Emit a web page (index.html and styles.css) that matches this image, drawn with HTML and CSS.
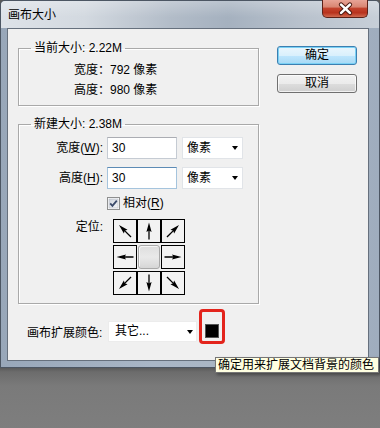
FILE: index.html
```html
<!DOCTYPE html>
<html lang="zh-CN">
<head>
<meta charset="utf-8">
<title>画布大小</title>
<link rel="stylesheet" href="styles.css">
</head>
<body>
<svg class="defs" width="0" height="0" aria-hidden="true">
  <defs>
    <symbol id="arr" viewBox="0 0 22 22">
      <path d="M11 19.5V9" stroke="#000" stroke-width="1.3" fill="none"/>
      <path d="M11 2.5L8.4 12L11 10.6L13.6 12Z" fill="#000"/>
    </symbol>
  </defs>
</svg>
<div class="screen">
  <div class="window">
    <div class="titlebar">
      <span class="title">画布大小</span>
      <div class="close">
        <svg width="46" height="18" viewBox="0 0 46 18">
          <path d="M19.5 4.5L28.5 13M28.5 4.5L19.5 13" stroke="#4a1a12" stroke-width="4.6" stroke-linecap="round"/>
          <path d="M19.5 4.5L28.5 13M28.5 4.5L19.5 13" stroke="#fff" stroke-width="2.6" stroke-linecap="round"/>
        </svg>
      </div>
    </div>
    <div class="client">
      <div class="left">
        <fieldset class="group g1">
          <legend>当前大小: 2.22M</legend>
          <div class="info info-first">宽度：792 像素</div>
          <div class="info">高度：980 像素</div>
        </fieldset>
        <fieldset class="group g2">
          <legend>新建大小: 2.38M</legend>
          <div class="row row-w">
            <span class="lbl">宽度(<u>W</u>):</span>
            <div class="input">30</div>
            <div class="select unit">像素<i class="caret"></i></div>
          </div>
          <div class="row row-h">
            <span class="lbl">高度(<u>H</u>):</span>
            <div class="input focus">30</div>
            <div class="select unit">像素<i class="caret"></i></div>
          </div>
          <div class="row row-check">
            <svg class="checkbox" width="13" height="13" viewBox="0 0 13 13">
              <defs>
                <linearGradient id="cbg" x1="0" y1="0" x2="1" y2="1">
                  <stop offset="0" stop-color="#cfd4dc"/>
                  <stop offset="1" stop-color="#f6f7f9"/>
                </linearGradient>
              </defs>
              <rect x="0.5" y="0.5" width="12" height="12" fill="#fff" stroke="#8e8f8f"/>
              <rect x="2" y="2" width="9" height="9" fill="url(#cbg)" stroke="#b4bac4" stroke-width="0.6"/>
              <path d="M3.2 6.4L5.4 8.8L9.8 3.6" fill="none" stroke="#3b4a6b" stroke-width="1.8"/>
            </svg>
            <span class="check-text">相对(<u>R</u>)</span>
          </div>
          <div class="row row-anchor">
            <span class="lbl lbl-anchor">定位:</span>
            <div class="anchor">
              <div class="cell"><svg viewBox="0 0 22 22"><use href="#arr" transform="rotate(-45 11 11)"/></svg></div>
              <div class="cell"><svg viewBox="0 0 22 22"><use href="#arr"/></svg></div>
              <div class="cell"><svg viewBox="0 0 22 22"><use href="#arr" transform="rotate(45 11 11)"/></svg></div>
              <div class="cell"><svg viewBox="0 0 22 22"><use href="#arr" transform="rotate(-90 11 11)"/></svg></div>
              <div class="cell center"></div>
              <div class="cell"><svg viewBox="0 0 22 22"><use href="#arr" transform="rotate(90 11 11)"/></svg></div>
              <div class="cell"><svg viewBox="0 0 22 22"><use href="#arr" transform="rotate(-135 11 11)"/></svg></div>
              <div class="cell"><svg viewBox="0 0 22 22"><use href="#arr" transform="rotate(180 11 11)"/></svg></div>
              <div class="cell"><svg viewBox="0 0 22 22"><use href="#arr" transform="rotate(135 11 11)"/></svg></div>
            </div>
          </div>
        </fieldset>
        <div class="bottom">
          <span class="ext-label">画布扩展颜色:</span>
          <div class="select ext">其它...<i class="caret"></i></div>
          <div class="highlight"><div class="swatch"></div></div>
        </div>
      </div>
      <div class="right">
        <div class="btn default">确定</div>
        <div class="btn">取消</div>
      </div>
    </div>
  </div>
  <div class="tooltip">确定用来扩展文档背景的颜色</div>
</div>
</body>
</html>
```

FILE: styles.css
```css
* { box-sizing: border-box; }
html, body { margin: 0; padding: 0; }
body {
  width: 380px;
  height: 428px;
  overflow: hidden;
  background: #7b7b7b;
  font-family: "Liberation Sans", "Noto Sans CJK SC", sans-serif;
  font-size: 12px;
  color: #000;
}
.defs { position: absolute; width: 0; height: 0; overflow: hidden; }

.screen {
  position: relative;
  width: 380px;
  height: 428px;
  background: linear-gradient(#5a5a5a 0, #5a5a5a 368px, #6c6c6c 372px, #7a7a7a 386px, #7e7e7e 100%);
}

.window {
  width: 380px;
  height: 368px;
  display: flex;
  flex-direction: column;
  border: 1px solid #4c5663;
  border-radius: 5px 5px 0 0;
  background: linear-gradient(to right, #98a7b9 0, #a9b6c6 40%, #aab6c4 70%, #9fadbe 100%);
}

.titlebar {
  height: 27px;
  flex: none;
  display: flex;
  justify-content: space-between;
  align-items: flex-start;
  background:
    linear-gradient(rgba(255,255,255,.25), rgba(255,255,255,0) 60%),
    linear-gradient(to right, #dde2e8 0, #d3d9e0 22%, #b2bcc8 45%, #a5b1bf 60%, #b9c2cd 80%, #c7cfd8 100%);
  border-radius: 4px 4px 0 0;
}
.title {
  padding-left: 7px;
  margin-top: 7px;
  line-height: 14px;
  font-size: 12px;
  color: #000;
}
.close {
  width: 46px;
  height: 18px;
  margin-right: 11px;
  margin-top: -1px;
  border: 1px solid #5c2118;
  border-top: none;
  border-radius: 0 0 5px 5px;
  background: linear-gradient(#e8a496 0, #d98673 40%, #c2422c 50%, #b8321d 75%, #cf6a50 100%);
  display: flex;
}
.close svg { display: block; margin-left: -1px; }

.client {
  flex: 1;
  margin: 0 10px 6px 6px;
  border: 1px solid #66707d;
  background: #f0f0f0;
  display: flex;
  padding: 12px 0 0 10px;
}

.left { width: 241px; flex: none; }

.group {
  margin: 0;
  padding: 0 12px 0 12px;
  border: 1px solid #a9a9a9;
  box-shadow: 1px 1px 0 #fff, inset 1px 1px 0 #fff;
  min-width: 0;
}
.group legend {
  padding: 0 3px;
  line-height: 14px;
}
.g1 { padding-bottom: 5px; }
.info {
  margin-left: 43px;
  line-height: 20px;
}
.info-first { margin-top: 5px; }

.g2 { margin-top: 11px; padding-bottom: 8px; }

.row { display: flex; align-items: center; }
.row-w { margin-top: 6px; height: 22px; }
.row-h { margin-top: 8px; height: 22px; }
.row-check { margin-top: 6px; height: 16px; padding-left: 76px; }
.row-anchor { margin-top: 8px; align-items: flex-start; }

.lbl {
  width: 72px;
  text-align: right;
  flex: none;
  line-height: 16px;
}
.lbl u { text-underline-offset: 2px; }

.input {
  width: 70px;
  height: 22px;
  margin-left: 4px;
  border: 1px solid #c5cbd3;
  border-top-color: #abadb3;
  background: #fff;
  padding-left: 4px;
  line-height: 20px;
}
.input.focus {
  border-color: #a5c4dd;
  border-top-color: #5d8bb5;
}

.select {
  position: relative;
  height: 22px;
  background: #fff;
  border: 1px solid #e1e4e8;
  line-height: 20px;
  padding-left: 4px;
}
.select.unit { width: 61px; margin-left: 5px; }
.caret {
  position: absolute;
  top: 8px;
  right: 4px;
  width: 0;
  height: 0;
  border-left: 3.5px solid transparent;
  border-right: 3.5px solid transparent;
  border-top: 4px solid #000;
}

.checkbox { display: block; flex: none; }
.check-text { margin-left: 3px; line-height: 16px; }
.check-text u { text-underline-offset: 2px; }

.lbl-anchor { margin-top: 0; }
.anchor {
  margin-left: 10px;
  display: grid;
  grid-template-columns: repeat(3, 24px);
  grid-template-rows: repeat(3, 24px);
  row-gap: 2px;
}
.cell {
  border: 1px solid #000;
  background: #f2f2f2;
}
.cell svg { display: block; width: 22px; height: 22px; }
.cell.center {
  border: 1px solid #a8a8a8;
  border-radius: 3px;
  margin: 0 1px;
  background: linear-gradient(#dedede, #e9e9e9 50%, #d6d6d6);
  box-shadow: inset 1px 1px 0 #f6f6f6;
}

.bottom {
  display: flex;
  align-items: flex-start;
  margin-top: 5px;
}
.ext-label {
  margin-left: 9px;
  width: 81px;
  margin-top: 16px;
  line-height: 16px;
  flex: none;
}
.select.ext {
  width: 89px;
  height: 21px;
  margin-top: 12px;
  padding-left: 6px;
  line-height: 19px;
  border-color: #ececec;
}
.select.ext .caret { right: 3px; top: 8px; }
.highlight {
  margin-left: 2px;
  width: 26px;
  height: 35px;
  border: 3px solid #e3241c;
  border-radius: 4px;
  padding: 12px 0 0 3px;
}
.swatch {
  width: 14px;
  height: 14px;
  background: #000;
  border: 1px solid #555;
}

.right {
  margin-left: 18px;
  margin-top: 5px;
  display: flex;
  flex-direction: column;
  gap: 9px;
}
.btn {
  width: 80px;
  height: 19px;
  border: 1px solid #707070;
  border-radius: 3px;
  text-align: center;
  line-height: 17px;
  background: linear-gradient(#f2f2f2 0, #ebebeb 50%, #dddddd 51%, #cfcfcf 100%);
  box-shadow: inset 0 0 0 1px rgba(255,255,255,.7);
}
.btn.default {
  border-color: #3c7fb1;
  background: linear-gradient(#eaf6fd 0, #d9f0fc 50%, #bee6fd 51%, #a7d9f5 100%);
  box-shadow: inset 0 0 0 1px #7ad1f5;
}

.tooltip {
  position: absolute;
  left: 215px;
  top: 357px;
  width: 164px;
  height: 16px;
  border: 1px solid #767676;
  background: #ffffe1;
  padding-left: 2px;
  line-height: 14px;
  white-space: nowrap;
  box-shadow: 2px 2px 3px rgba(0,0,0,.35);
}
```
